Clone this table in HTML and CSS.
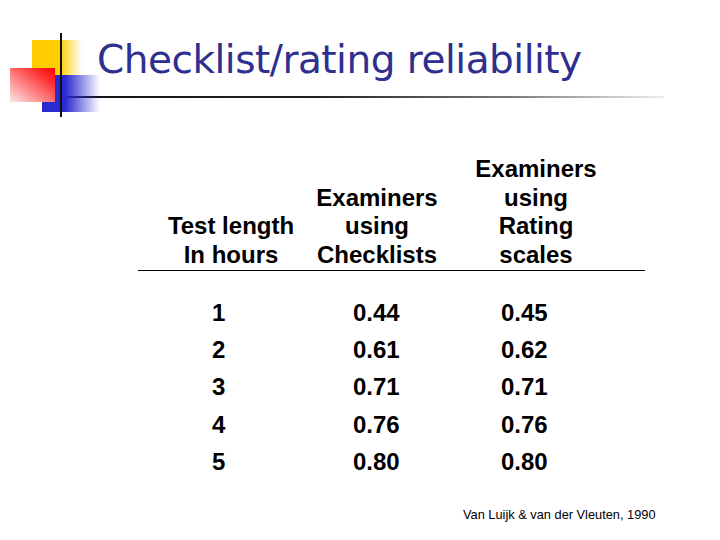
FILE: index.html
```html
<!DOCTYPE html>
<html>
<head>
<meta charset="utf-8">
<link rel="stylesheet" href="styles.css">
</head>
<body>
<div class="slide">
  <svg class="logo" width="110" height="120" viewBox="0 0 110 120" xmlns="http://www.w3.org/2000/svg">
    <defs>
      <linearGradient id="gy" x1="0" y1="0" x2="1" y2="0">
        <stop offset="0" stop-color="#ffcc00"/>
        <stop offset="0.55" stop-color="#ffcc00"/>
        <stop offset="1" stop-color="#ffcc00" stop-opacity="0"/>
      </linearGradient>
      <linearGradient id="gb" x1="0" y1="0" x2="1" y2="0">
        <stop offset="0" stop-color="#2a2ad0"/>
        <stop offset="0.4" stop-color="#2a2ad0"/>
        <stop offset="1" stop-color="#2a2ad0" stop-opacity="0"/>
      </linearGradient>
      <linearGradient id="gr" x1="0" y1="1" x2="1" y2="0">
        <stop offset="0" stop-color="#fce8e8"/>
        <stop offset="0.75" stop-color="#ff3030"/>
        <stop offset="1" stop-color="#ff0000"/>
      </linearGradient>
    </defs>
    <rect x="32" y="40" width="50" height="35" fill="url(#gy)"/>
    <rect x="42" y="75" width="58" height="37" fill="url(#gb)"/>
    <rect x="10" y="68" width="45" height="34" fill="url(#gr)"/>
    <rect x="60" y="33" width="2" height="84" fill="#111"/>
  </svg>
  <header class="head">
    <h1 class="title">Checklist/rating reliability</h1>
    <div class="rule"></div>
  </header>

  <section class="table">
    <div class="thead">
      <div class="th c1">Test length<br>In hours</div>
      <div class="th c2">Examiners<br>using<br>Checklists</div>
      <div class="th c3">Examiners<br>using<br>Rating<br>scales</div>
    </div>
    <div class="hr"></div>
    <div class="tbody">
      <div class="td c1">1</div><div class="td c2">0.44</div><div class="td c3">0.45</div>
      <div class="td c1">2</div><div class="td c2">0.61</div><div class="td c3">0.62</div>
      <div class="td c1">3</div><div class="td c2">0.71</div><div class="td c3">0.71</div>
      <div class="td c1">4</div><div class="td c2">0.76</div><div class="td c3">0.76</div>
      <div class="td c1">5</div><div class="td c2">0.80</div><div class="td c3">0.80</div>
    </div>
  </section>

  <footer class="cite">Van Luijk &amp; van der Vleuten, 1990</footer>
</div>
</body>
</html>
```
FILE: styles.css
```css
html, body {
  margin: 0;
  padding: 0;
  background: #fff;
}
.slide {
  position: relative;
  width: 720px;
  height: 540px;
  overflow: hidden;
  font-family: "Liberation Sans", Arial, sans-serif;
  color: #000;
}
.logo {
  position: absolute;
  left: 0;
  top: 0;
}
.head {
  padding-top: 35px;
}
.title {
  margin: 0 0 0 97px;
  font-family: "DejaVu Sans", Verdana, sans-serif;
  font-weight: normal;
  font-size: 39px;
  line-height: 50px;
  height: 50px;
  color: #2f2f8f;
  letter-spacing: -0.5px;
  white-space: nowrap;
}
.rule {
  margin: 11px 0 0 34px;
  width: 630px;
  height: 2px;
  background: linear-gradient(to right, #111 0%, #222 45%, #777 75%, #eee 100%);
}
.table {
  margin-top: 57px;
}
.thead {
  display: grid;
  grid-template-columns: 142px 150px 168px;
  margin-left: 160px;
  align-items: end;
  font-weight: bold;
  font-size: 24px;
  line-height: 28.7px;
}
.th {
  text-align: center;
}
.hr {
  margin: 0 0 0 138px;
  width: 507px;
  height: 1px;
  background: #000;
}
.tbody {
  margin-top: 23px;
  margin-left: 160px;
  display: grid;
  grid-template-columns: 142px 150px 168px;
  font-weight: bold;
  font-size: 24px;
  line-height: 37.25px;
}
.td.c1 { padding-left: 52px; }
.td.c2 { padding-left: 51px; }
.td.c3 { padding-left: 49px; }
.cite {
  position: absolute;
  left: 463px;
  top: 507px;
  font-size: 12.8px;
  line-height: 16px;
  white-space: nowrap;
}
```
